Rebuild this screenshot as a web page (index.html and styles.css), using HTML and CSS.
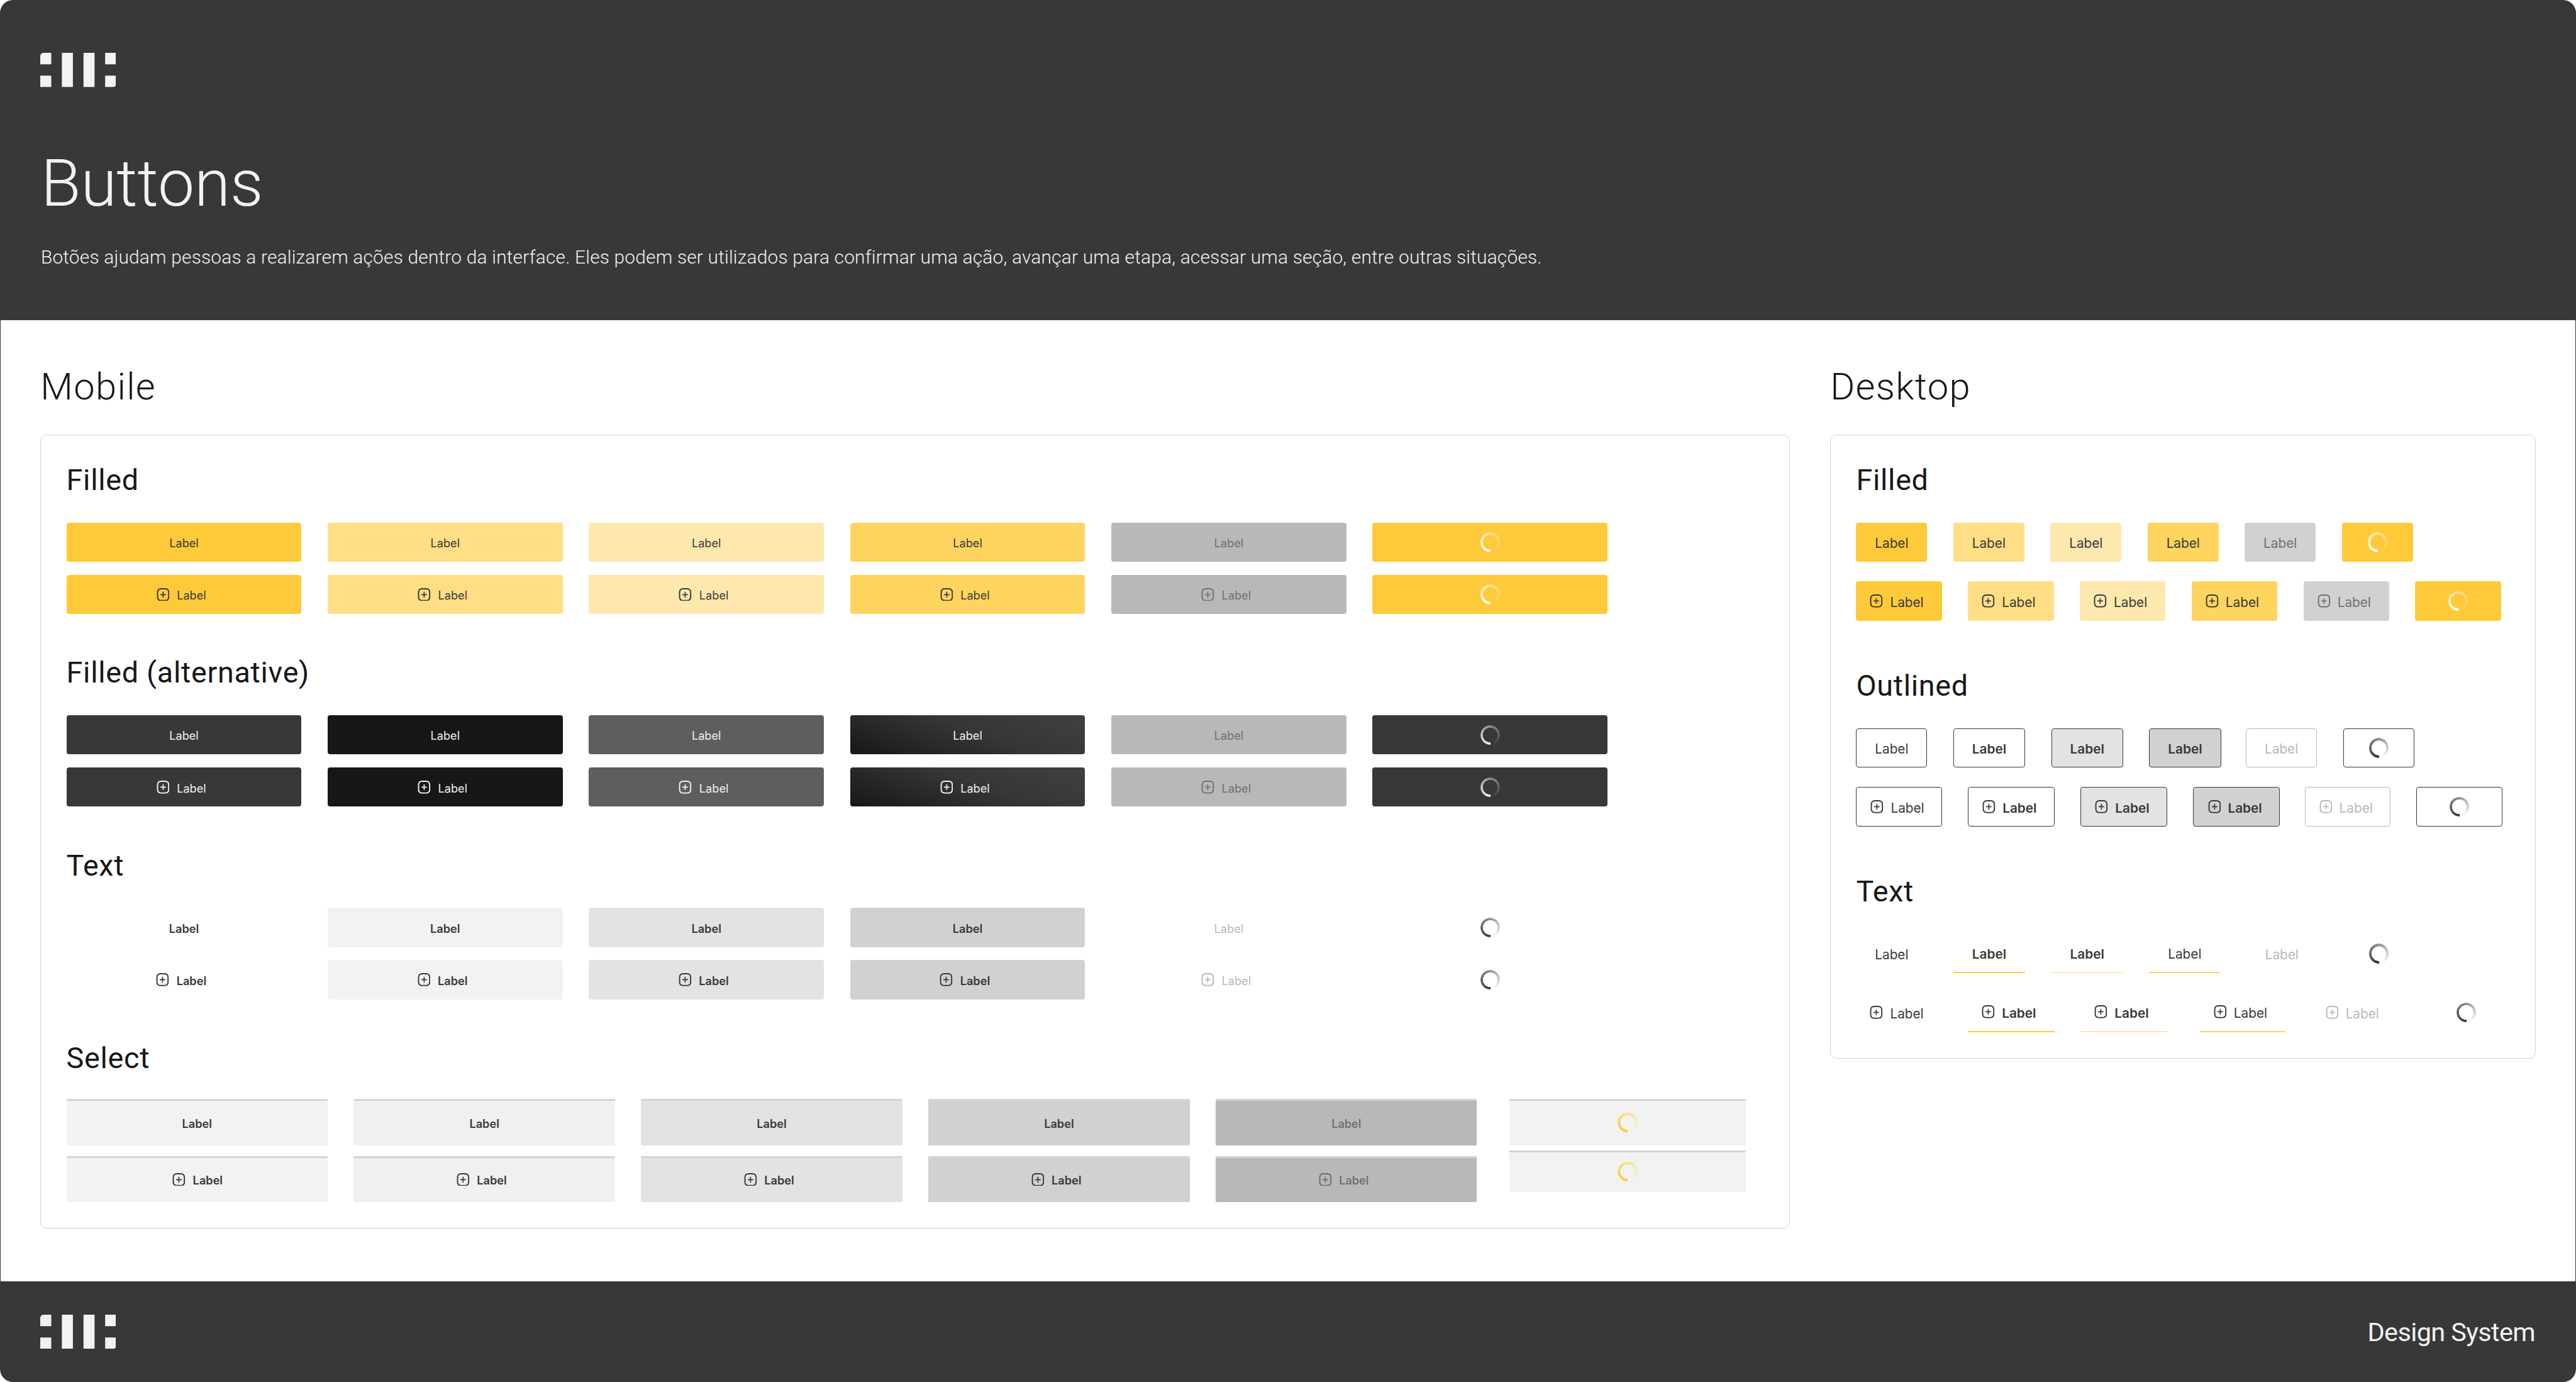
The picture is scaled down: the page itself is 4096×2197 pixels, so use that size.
FILE: index.html
```html
<!DOCTYPE html>
<html lang="pt-BR">
<head>
<meta charset="utf-8">
<title>Buttons</title>
<link rel="stylesheet" href="styles.css">
</head>
<body>
<svg class="defs" width="0" height="0" aria-hidden="true">
  <symbol id="plus" viewBox="0 0 8 8"><rect x=".6" y=".4" width="6.8" height="7.2" rx="2" fill="none" stroke="currentColor" stroke-width=".75"/><path d="M4 2.2v3.6M2.3 4h3.4" fill="none" stroke="currentColor" stroke-width=".65"/></symbol>
  <symbol id="logo" viewBox="0 0 186 84"><path d="M8 0h19v28H0V8a8 8 0 0 1 8-8zM0 56h27v28H0zM53 0h27v84H53zM106 0h27v84h-27zM159 0h27v28h-27zM159 56h27v20a8 8 0 0 1-8 8h-19z" fill="currentColor"/></symbol>
</svg>
<div class="page">
  <header class="top">
    <svg class="logo"><use href="#logo"/></svg>
    <h1 class="title">Buttons</h1>
    <p class="lead">Botões ajudam pessoas a realizarem ações dentro da interface. Eles podem ser utilizados para confirmar uma ação, avançar uma etapa, acessar uma seção, entre outras situações.</p>
  </header>
  <main class="main">
    <section class="col col-m">
      <h2 class="col-title">Mobile</h2>
      <div class="card">
        <div class="group">
          <h3 class="group-title">Filled</h3>
          <div class="row m">
            <div class="btn y1">Label</div><div class="btn y2">Label</div><div class="btn y3">Label</div><div class="btn y4">Label</div><div class="btn dis">Label</div><div class="btn y1"><i class="spin on-y"></i></div>
          </div>
          <div class="row m">
            <div class="btn y1 ic"><svg class="plus"><use href="#plus"/></svg>Label</div><div class="btn y2 ic"><svg class="plus"><use href="#plus"/></svg>Label</div><div class="btn y3 ic"><svg class="plus"><use href="#plus"/></svg>Label</div><div class="btn y4 ic"><svg class="plus"><use href="#plus"/></svg>Label</div><div class="btn dis ic"><svg class="plus"><use href="#plus"/></svg>Label</div><div class="btn y1"><i class="spin on-y"></i></div>
          </div>
        </div>
        <div class="group">
          <h3 class="group-title">Filled (alternative)</h3>
          <div class="row m">
            <div class="btn k1">Label</div><div class="btn k2">Label</div><div class="btn k3">Label</div><div class="btn k4">Label</div><div class="btn dis">Label</div><div class="btn k1"><i class="spin on-k"></i></div>
          </div>
          <div class="row m">
            <div class="btn k1 ic"><svg class="plus"><use href="#plus"/></svg>Label</div><div class="btn k2 ic"><svg class="plus"><use href="#plus"/></svg>Label</div><div class="btn k3 ic"><svg class="plus"><use href="#plus"/></svg>Label</div><div class="btn k4 ic"><svg class="plus"><use href="#plus"/></svg>Label</div><div class="btn dis ic"><svg class="plus"><use href="#plus"/></svg>Label</div><div class="btn k1"><i class="spin on-k"></i></div>
          </div>
        </div>
        <div class="group">
          <h3 class="group-title">Text</h3>
          <div class="row m">
            <div class="btn b">Label</div><div class="btn b g1">Label</div><div class="btn b g2">Label</div><div class="btn b g3">Label</div><div class="btn off">Label</div><div class="btn"><i class="spin on-w"></i></div>
          </div>
          <div class="row m">
            <div class="btn b ic"><svg class="plus"><use href="#plus"/></svg>Label</div><div class="btn b g1 ic"><svg class="plus"><use href="#plus"/></svg>Label</div><div class="btn b g2 ic"><svg class="plus"><use href="#plus"/></svg>Label</div><div class="btn b g3 ic"><svg class="plus"><use href="#plus"/></svg>Label</div><div class="btn off ic"><svg class="plus"><use href="#plus"/></svg>Label</div><div class="btn"><i class="spin on-w"></i></div>
          </div>
        </div>
        <div class="group select">
          <h3 class="group-title">Select</h3>
          <div class="row sel">
            <div class="btn sl b g1">Label</div><div class="btn sl b g1b">Label</div><div class="btn sl b g2">Label</div><div class="btn sl b g3">Label</div><div class="btn sl gd">Label</div><div class="btn sl last g1"><i class="spin on-s"></i></div>
          </div>
          <div class="row sel second">
            <div class="btn sl b g1 ic shift"><svg class="plus"><use href="#plus"/></svg>Label</div><div class="btn sl b g1b ic"><svg class="plus"><use href="#plus"/></svg>Label</div><div class="btn sl b g2 ic"><svg class="plus"><use href="#plus"/></svg>Label</div><div class="btn sl b g3 ic"><svg class="plus"><use href="#plus"/></svg>Label</div><div class="btn sl gd ic"><svg class="plus"><use href="#plus"/></svg>Label</div><div class="btn sl last short g1"><i class="spin on-s"></i></div>
          </div>
        </div>
      </div>
    </section>
    <section class="col col-d">
      <h2 class="col-title">Desktop</h2>
      <div class="card card-d">
        <div class="group">
          <h3 class="group-title">Filled</h3>
          <div class="row d">
            <div class="btn y1">Label</div><div class="btn y2">Label</div><div class="btn y3">Label</div><div class="btn y4">Label</div><div class="btn dis-d">Label</div><div class="btn y1"><i class="spin on-y"></i></div>
          </div>
          <div class="row d">
            <div class="btn y1 ic"><svg class="plus"><use href="#plus"/></svg>Label</div><div class="btn y2 ic"><svg class="plus"><use href="#plus"/></svg>Label</div><div class="btn y3 ic"><svg class="plus"><use href="#plus"/></svg>Label</div><div class="btn y4 ic"><svg class="plus"><use href="#plus"/></svg>Label</div><div class="btn dis-d ic"><svg class="plus"><use href="#plus"/></svg>Label</div><div class="btn y1 nolab"><i class="spin on-y"></i></div>
          </div>
        </div>
        <div class="group">
          <h3 class="group-title">Outlined</h3>
          <div class="row d">
            <div class="btn o">Label</div><div class="btn o b">Label</div><div class="btn o b g2">Label</div><div class="btn o b g3">Label</div><div class="btn o-off">Label</div><div class="btn o"><i class="spin on-w"></i></div>
          </div>
          <div class="row d">
            <div class="btn o ic"><svg class="plus"><use href="#plus"/></svg>Label</div><div class="btn o b ic"><svg class="plus"><use href="#plus"/></svg>Label</div><div class="btn o b g2 ic"><svg class="plus"><use href="#plus"/></svg>Label</div><div class="btn o b g3 ic"><svg class="plus"><use href="#plus"/></svg>Label</div><div class="btn o-off ic"><svg class="plus"><use href="#plus"/></svg>Label</div><div class="btn o nolab"><i class="spin on-w"></i></div>
          </div>
        </div>
        <div class="group">
          <h3 class="group-title">Text</h3>
          <div class="row d">
            <div class="btn">Label</div><div class="btn b u1">Label</div><div class="btn b u2">Label</div><div class="btn u3">Label</div><div class="btn off">Label</div><div class="btn"><i class="spin on-w"></i></div>
          </div>
          <div class="row d">
            <div class="btn ic"><svg class="plus"><use href="#plus"/></svg>Label</div><div class="btn b u1 ic"><svg class="plus"><use href="#plus"/></svg>Label</div><div class="btn b u2 ic"><svg class="plus"><use href="#plus"/></svg>Label</div><div class="btn u3 ic push"><svg class="plus"><use href="#plus"/></svg>Label</div><div class="btn off ic"><svg class="plus"><use href="#plus"/></svg>Label</div><div class="btn nolab"><i class="spin on-w"></i></div>
          </div>
        </div>
      </div>
    </section>
  </main>
  <footer class="bottom">
    <svg class="logo"><use href="#logo"/></svg>
    <span class="brand">Design System</span>
  </footer>
</div>
</body>
</html>
```
FILE: styles.css
```css
* { box-sizing: border-box; }
html, body { margin: 0; height: 100%; background: #fff; }
.defs { position: absolute; }
.page {
  zoom: 2.596;
  height: 846.3px;
  display: flex;
  flex-direction: column;
  font-family: Inter, "Liberation Sans", sans-serif;
  color: #383838;
  overflow: hidden;
}
.logo { display: block; width: 46.5px; height: 21px; color: #f2f2f2; }
.top {
  height: 196px;
  flex: none;
  background: #383838;
  color: #f2f2f2;
  border-radius: 8px 8px 0 0;
  padding: 32.5px 24.5px 0;
}
.title {
  margin: 35px 0 0;
  font: 300 40px/48px Roboto, sans-serif;
  letter-spacing: -.05px;
  padding-left: .5px;
}
.lead {
  margin: 13px 0 0;
  font: 300 11.5px/16px Roboto, sans-serif;
  letter-spacing: .08px;
  padding-left: .5px;
}
.main {
  flex: 1;
  display: flex;
  gap: 24.75px;
  padding: 0 24px 0 24.4px;
  border-left: .5px solid #383838;
  border-right: .5px solid #383838;
}
.col-m { width: 1071.5px; flex: none; }
.col-d { width: 432px; flex: none; }
.col-title {
  margin: 0;
  height: 70.25px;
  padding-top: 23px;
  font: 300 23px/36px Roboto, sans-serif;
  letter-spacing: .5px;
  color: #171717;
}
.card {
  border: .5px solid #d1d1d1;
  border-radius: 4px;
  padding: 15.4px 15.5px 15.8px;
  display: flex;
  flex-direction: column;
  gap: 24px;
}
.card-d { gap: 28px; }
.group { display: flex; flex-direction: column; }
.group-title {
  margin: 0 0 14px;
  font: 400 18px/24px Roboto, sans-serif;
  letter-spacing: .27px;
  color: #171717;
}
.row { display: flex; gap: 16px; }
.row.m + .row.m { margin-top: 8px; }
.row.d + .row.d { margin-top: 12px; }

.btn {
  flex: none;
  display: flex;
  align-items: center;
  justify-content: center;
  height: 24px;
  border-radius: 1.5px;
  font-size: 7px;
  line-height: 9px;
  padding-top: 1.5px;
  white-space: nowrap;
  color: #383838;
}
.m .btn { width: 144px; }
.m .ic, .sel .ic { padding-right: 3.3px; }
.plus { width: 8px; height: 8px; flex: none; margin-right: 4.5px; margin-top: -1.5px; }
.b { font-weight: 600; }

.y1 { background: #ffca3a; }
.y2 { background: #ffde85; }
.y3 { background: #ffe8ae; }
.y4 { background: #ffd55f; }
.dis { background: #b8b8b8; color: #707070; }
.dis-d { background: #d1d1d1; color: #707070; }
.k1 { background: #383838; color: #f2f2f2; }
.k2 { background: #171717; color: #f2f2f2; }
.k3 { background: #5e5e5e; color: #f2f2f2; }
.k4 { background: linear-gradient(200deg, #404040 0%, #363636 45%, #171717 100%); color: #f2f2f2; }
.g1 { background: #f2f2f2; }
.g1b { background: #f0f0f0; }
.g2 { background: #e3e3e3; }
.g3 { background: #d1d1d1; }
.gd { background: #b8b8b8; color: #6b6b6b; font-weight: 500; }
.off { color: #b8b8b8; }

.select .group-title { margin-bottom: 13px; }
.sel .sl {
  width: 160px;
  height: 28.5px;
  border-radius: .5px;
  border-top: 1.25px solid #d4d4d4;
  padding-top: .8px;
}
.sel .plus { margin-top: -1.4px; }
.sel .shift { padding-left: .7px; padding-right: 0; }
.sel .sl.last { width: 144.5px; margin-left: 4px; padding-top: 0; padding-bottom: .6px; }
.row.sel.second { margin-top: 6.5px; align-items: flex-start; }
.sel.second .sl { height: 28px; }
.sel.second .sl.short { height: 25.5px; margin-top: -3.5px; }

.d .btn { width: 43.5px; font-size: 8px; }
.d .b { width: 44px; }
.d .nolab { width: 52.5px; }
.d .ic { width: 52.5px; justify-content: flex-start; padding-left: 8.5px; }
.d .b.ic { width: 53px; }
.d .plus { margin-right: 4.3px; }
.d .o-off { margin-left: -.75px; }
.o { border: .5px solid #383838; }
.o-off { border: .5px solid #b8b8b8; color: #b8b8b8; }
.u1 { border-bottom: 1px solid #ffca3a; }
.u2 { border-bottom: 1px solid #ffe8ae; }
.u3 { border-bottom: 1px solid #ffd55f; }
.d .u1, .d .u2, .d .u3 { border-radius: 0; }
.push { margin-left: 4px; }

.spin {
  display: block;
  width: 12px;
  height: 12px;
  border-radius: 50%;
  margin-top: -1.5px;
  -webkit-mask: radial-gradient(circle closest-side, transparent 74%, #000 76%);
  mask: radial-gradient(circle closest-side, transparent 74%, #000 76%);
}
.sel .spin { margin-top: 0; }
.on-y { background: conic-gradient(from 180deg, #fff 0deg, rgba(255,255,255,.45) 180deg, rgba(255,255,255,0) 350deg); }
.on-k { background: conic-gradient(from 180deg, #f2f2f2 0deg, rgba(242,242,242,.45) 180deg, rgba(242,242,242,0) 350deg); }
.on-w { background: conic-gradient(from 180deg, #383838 0deg, rgba(56,56,56,.55) 180deg, rgba(56,56,56,0) 340deg); }
.on-s { background: conic-gradient(from 180deg, #ffca3a 0deg, #ffde85 180deg, rgba(255,222,133,0) 340deg); }

.bottom {
  height: 61.8px;
  flex: none;
  background: #383838;
  border-radius: 0 0 8px 8px;
  display: flex;
  align-items: center;
  justify-content: space-between;
  padding: 0 25px 0 24.5px;
}
.brand {
  font: 400 16px/20px Roboto, sans-serif;
  color: #f2f2f2;
  letter-spacing: -.25px;
  padding-top: 1px;
}
```
